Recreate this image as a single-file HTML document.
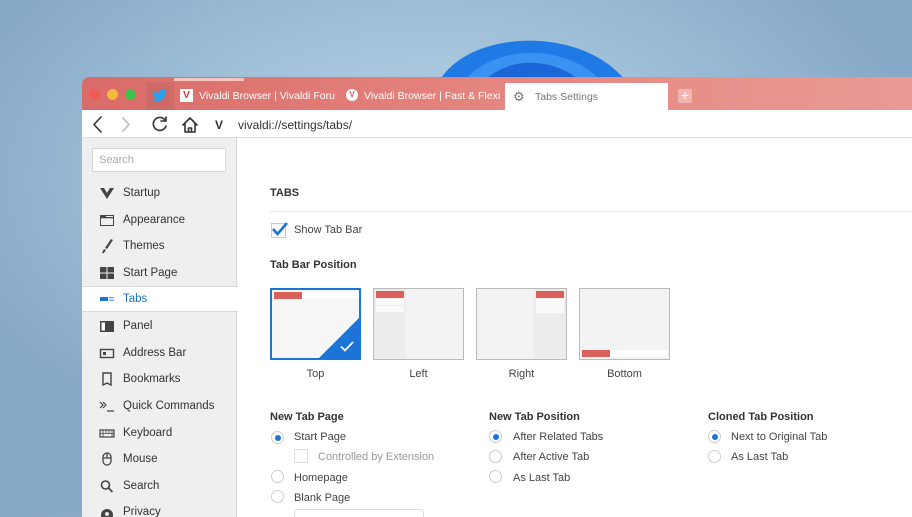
<!DOCTYPE html>
<html><head><style>
*{box-sizing:border-box;margin:0;padding:0}
body{width:912px;height:513px;overflow:hidden;position:relative;font-family:"Liberation Sans",sans-serif;background:radial-gradient(ellipse 500px 300px at 430px 180px,#bcd5e6 0%,#9fbfd8 55%,#86a9c7 100%)}
.abs{position:absolute}
.win{left:82px;top:77px;width:840px;height:440px;border-radius:7px 0 0 0;overflow:hidden;background:#fff}
.tabbar{left:0;top:0;width:840px;height:33px;background:linear-gradient(90deg,#d96b68,#e58680 50%,#e99b95)}
.dot{width:11px;height:11px;border-radius:50%;top:12px}
.tab{top:5px;height:28px;font-size:10.5px;color:#fff;line-height:28px;white-space:nowrap;overflow:hidden}
.addr{left:0;top:33px;width:840px;height:28px;background:#fff;border-bottom:1px solid #ddd}
.side{left:0;top:61px;width:155px;height:400px;background:#efefef;border-right:1px solid #d8d8d8}
.item{left:0;width:155px;height:26px;font-size:11.5px;color:#333;line-height:28px;padding-left:41px}
.ic{position:absolute;left:17px;top:7px;width:16px;height:14px}
.h{font-size:11px;font-weight:bold;color:#333}
.t{font-size:11px;color:#444}
.thumb{top:211px;width:91px;height:72px;border:1px solid #bbb;background:#f3f3f3;overflow:hidden}
.lbl{top:291px;font-size:11px;color:#444;width:91px;text-align:center}
.r{width:13px;height:13px;border-radius:50%;border:1px solid #ccc;background:#fff}
.r.on::after{content:"";position:absolute;left:3px;top:3px;width:6px;height:6px;border-radius:50%;background:#1d74d8}
</style></head><body>
<svg class="abs" style="left:430px;top:35px" width="200" height="45" viewBox="0 0 200 45"><path d="M10 45 C40 -5 150 -10 195 45 Z" fill="#1f7ae6"/><path d="M35 45 C65 10 135 8 170 45 Z" fill="#3a92f2"/><path d="M55 45 C80 22 120 22 150 45Z" fill="#1a66d6"/></svg>
<div class="abs win">
 <div class="abs tabbar">
  <div class="abs dot" style="left:7px;background:#ee5b57"></div>
  <div class="abs dot" style="left:25px;background:#f4b93a"></div>
  <div class="abs dot" style="left:43px;background:#3ec24a"></div>
  <div class="abs" style="left:64px;top:5px;width:28px;height:28px;background:rgba(0,0,0,.05)"></div>
  <svg class="abs" style="left:70px;top:12px" width="15" height="13" viewBox="0 0 24 20"><path d="M24 2.4a10 10 0 0 1-2.8.8A5 5 0 0 0 23.3.4a10 10 0 0 1-3.1 1.2A4.9 4.9 0 0 0 11.8 6 14 14 0 0 1 1.7.9a4.9 4.9 0 0 0 1.5 6.6A5 5 0 0 1 1 6.9a4.9 4.9 0 0 0 3.9 4.9 5 5 0 0 1-2.2.1 4.9 4.9 0 0 0 4.6 3.4A9.9 9.9 0 0 1 0 17.3 14 14 0 0 0 7.5 19.5c9 0 14-7.5 14-14v-.6A10 10 0 0 0 24 2.4z" fill="#2aa1ee"/></svg>
  <div class="abs" style="left:92px;top:1px;width:70px;height:3px;background:#f5c5c2"></div>
  <div class="abs tab" style="left:96px;width:160px"><span style="display:inline-block;width:13px;height:13px;background:#fff;vertical-align:middle;margin:-2px 6px 0 2px;color:#d33;font-size:10px;font-weight:bold;line-height:13px;text-align:center">V</span>Vivaldi Browser | Vivaldi Foru</div>
  <div class="abs tab" style="left:262px;width:160px"><span style="display:inline-block;width:12px;height:12px;border-radius:50%;background:#fff;vertical-align:middle;margin:-2px 6px 0 2px;color:#d55;font-size:8px;font-weight:bold;line-height:12px;text-align:center">V</span>Vivaldi Browser | Fast &amp; Flexi</div>
  <div class="abs tab" style="left:423px;width:163px;background:#fff;color:#777;padding-left:30px;top:6px;height:27px">Tabs Settings<span style="position:absolute;left:8px;top:0;color:#777;font-size:13px">⚙</span></div>
  <div class="abs" style="left:596px;top:12px;width:14px;height:14px;border-radius:2px;background:#f2b5b1;color:#fff;font-size:14px;line-height:13px;text-align:center">+</div>
 </div>
 <div class="abs addr">
  <svg class="abs" style="left:8px;top:6px" width="110" height="17" viewBox="0 0 110 17" fill="none" stroke-width="1.6" stroke-linecap="round" stroke-linejoin="round"><path d="M11 1 L4 8.5 L11 16" stroke="#333"/><path d="M33 2 L39 8.5 L33 15" stroke="#bbb"/><path d="M75 4 A6.5 6.5 0 1 0 76 10" stroke="#333"/><path d="M71 5 L76 5 L76 1" stroke="#333"/><path d="M93 9 L100 2 L107 9 M95 7 V16 H105 V7 M98.5 16 V12 H101.5 V16" stroke="#333"/></svg>
  <div class="abs" style="left:133px;top:8px;font-size:12px;color:#333;font-weight:bold">V</div>
  <div class="abs" style="left:156px;top:8px;font-size:12px;color:#333">vivaldi://settings/tabs/</div>
 </div>
 <div class="abs side">
  <div class="abs" style="left:10px;top:10px;width:134px;height:24px;background:#fff;border:1px solid #d6d6d6;font-size:11px;color:#aaa;line-height:22px;padding-left:6px">Search</div>
 </div>
 <div class="abs item" style="top:102px"><svg class="ic" viewBox="0 0 16 14"><path d="M1 2 L8 13 L15 2 L11 2 L8 7 L5 2Z" fill="#444"/></svg>Startup</div>
 <div class="abs item" style="top:129px"><svg class="ic" viewBox="0 0 16 14"><rect x="1.5" y="2.5" width="13" height="10" fill="none" stroke="#444"/><rect x="1" y="2" width="6" height="2" fill="#444"/><rect x="1" y="4" width="14" height="1.3" fill="#444"/></svg>Appearance</div>
 <div class="abs item" style="top:155px"><svg class="ic" viewBox="0 0 16 14"><path d="M12 0 L14 1 L8 10 L6 9Z M5 10 L7 11 L5 14 L3 14Z" fill="#444"/></svg>Themes</div>
 <div class="abs item" style="top:182px"><svg class="ic" viewBox="0 0 16 14"><rect x="1" y="1" width="6.5" height="5.5" fill="#444"/><rect x="8.5" y="1" width="6.5" height="5.5" fill="#444"/><rect x="1" y="7.5" width="6.5" height="5.5" fill="#444"/><rect x="8.5" y="7.5" width="6.5" height="5.5" fill="#444"/></svg>Start Page</div>
 <div class="abs item" style="top:209px;height:26px;background:#fff;border-top:1px solid #d8d8d8;border-bottom:1px solid #d8d8d8;width:156px;color:#1d6fc9;line-height:24px"><svg class="ic" style="top:5px" viewBox="0 0 16 14"><rect x="1" y="5" width="8" height="4" fill="#1d74d8"/><rect x="10" y="5" width="5" height="1.3" fill="#6aa3e6"/><rect x="10" y="7.7" width="5" height="1.3" fill="#6aa3e6"/></svg>Tabs</div>
 <div class="abs item" style="top:235px"><svg class="ic" viewBox="0 0 16 14"><rect x="1" y="2" width="14" height="11" fill="#444"/><rect x="2.5" y="3.5" width="3.5" height="8" fill="#fff"/></svg>Panel</div>
 <div class="abs item" style="top:262px"><svg class="ic" viewBox="0 0 16 14"><rect x="1.5" y="3.5" width="13" height="8" fill="none" stroke="#444" stroke-width="1.4"/><rect x="4" y="6" width="3" height="3" fill="#444"/></svg>Address Bar</div>
 <div class="abs item" style="top:288px"><svg class="ic" viewBox="0 0 16 14"><path d="M4 1 H12 V13 L8 11 L4 13Z" fill="none" stroke="#444" stroke-width="1.4"/></svg>Bookmarks</div>
 <div class="abs item" style="top:315px"><svg class="ic" viewBox="0 0 16 14"><path d="M1 3 L4 6 L1 9 M4 3 L7 6 L4 9 M8 12 H15" fill="none" stroke="#444" stroke-width="1.2"/></svg>Quick Commands</div>
 <div class="abs item" style="top:342px"><svg class="ic" viewBox="0 0 16 14"><rect x="1" y="4" width="14" height="7" fill="none" stroke="#444" stroke-width="1.2"/><path d="M1 7.5 H15 M4 4 V11 M7 4 V7.5 M10 4 V7.5 M13 4 V11" stroke="#444" stroke-width=".8"/></svg>Keyboard</div>
 <div class="abs item" style="top:368px"><svg class="ic" viewBox="0 0 16 14"><path d="M4 5 A4 4 0 0 1 12 5 V9 A4 4 0 0 1 4 9Z M4 6 H12 M8 1 V6" fill="none" stroke="#444" stroke-width="1.3"/></svg>Mouse</div>
 <div class="abs item" style="top:395px"><svg class="ic" viewBox="0 0 16 14"><circle cx="6.5" cy="6" r="4" fill="none" stroke="#444" stroke-width="1.6"/><path d="M9.5 9 L13.5 13" stroke="#444" stroke-width="1.8"/></svg>Search</div>
 <div class="abs item" style="top:421px"><svg class="ic" viewBox="0 0 16 14"><circle cx="8" cy="10" r="6" fill="#444"/><circle cx="8" cy="9" r="2" fill="#efefef"/></svg>Privacy</div>

 <div class="abs h" style="left:188px;top:110px">TABS</div>
 <div class="abs" style="left:188px;top:134px;width:660px;height:1px;background:#e6e6e6"></div>
 <div class="abs" style="left:189px;top:146px;width:15px;height:15px;border:1px solid #ccc;background:#fff"></div>
 <svg class="abs" style="left:189px;top:144px" width="18" height="16" viewBox="0 0 18 16"><path d="M2 8 L6.5 13 L16 2" fill="none" stroke="#1d74d8" stroke-width="2.6"/></svg>
 <div class="abs t" style="left:212px;top:147px">Show Tab Bar</div>
 <div class="abs h" style="left:188px;top:182px">Tab Bar Position</div>

 <div class="abs thumb" style="left:188px;border:2px solid #1d74d8;background:#f6f6f6"><div class="abs" style="left:2px;top:2px;width:28px;height:7px;background:#d9605b"></div><div class="abs" style="left:30px;top:2px;width:57px;height:7px;background:#fff"></div><div class="abs" style="right:0;bottom:0;width:0;height:0;border-left:40px solid transparent;border-bottom:40px solid #1d74d8"></div><svg class="abs" style="right:5px;bottom:6px" width="14" height="11" viewBox="0 0 14 11"><path d="M1 5.5 L5 9.5 L13 1" fill="none" stroke="#fff" stroke-width="1.8"/></svg></div>
 <div class="abs thumb" style="left:291px"><div class="abs" style="left:0;top:0;width:32px;height:72px;background:#ececec"></div><div class="abs" style="left:2px;top:2px;width:28px;height:7px;background:#d9605b"></div><div class="abs" style="left:2px;top:10px;width:28px;height:6px;background:#fafafa"></div><div class="abs" style="left:2px;top:17px;width:28px;height:6px;background:#fafafa"></div></div>
 <div class="abs thumb" style="left:394px"><div class="abs" style="right:0;top:0;width:32px;height:72px;background:#ececec"></div><div class="abs" style="right:2px;top:2px;width:28px;height:7px;background:#d9605b"></div><div class="abs" style="right:2px;top:10px;width:28px;height:14px;background:#fafafa"></div></div>
 <div class="abs thumb" style="left:497px"><div class="abs" style="left:2px;bottom:2px;width:28px;height:7px;background:#d9605b"></div><div class="abs" style="left:30px;bottom:2px;width:57px;height:7px;background:#fff"></div></div>
 <div class="abs lbl" style="left:188px">Top</div>
 <div class="abs lbl" style="left:291px">Left</div>
 <div class="abs lbl" style="left:394px">Right</div>
 <div class="abs lbl" style="left:497px">Bottom</div>

 <div class="abs h" style="left:188px;top:334px">New Tab Page</div>
 <div class="abs r on" style="left:189px;top:354px"></div><div class="abs t" style="left:212px;top:354px">Start Page</div>
 <div class="abs" style="left:212px;top:372px;width:14px;height:14px;border:1px solid #ddd;background:#fff"></div><div class="abs t" style="left:236px;top:374px;color:#999">Controlled by Extension</div>
 <div class="abs r" style="left:189px;top:393px"></div><div class="abs t" style="left:212px;top:395px">Homepage</div>
 <div class="abs r" style="left:189px;top:413px"></div><div class="abs t" style="left:212px;top:415px">Blank Page</div>
 <div class="abs" style="left:212px;top:432px;width:130px;height:10px;border:1px solid #ddd;border-radius:3px"></div>

 <div class="abs h" style="left:407px;top:334px">New Tab Position</div>
 <div class="abs r on" style="left:407px;top:353px"></div><div class="abs t" style="left:431px;top:354px">After Related Tabs</div>
 <div class="abs r" style="left:407px;top:373px"></div><div class="abs t" style="left:431px;top:374px">After Active Tab</div>
 <div class="abs r" style="left:407px;top:393px"></div><div class="abs t" style="left:431px;top:395px">As Last Tab</div>

 <div class="abs h" style="left:626px;top:334px">Cloned Tab Position</div>
 <div class="abs r on" style="left:626px;top:353px"></div><div class="abs t" style="left:649px;top:354px">Next to Original Tab</div>
 <div class="abs r" style="left:626px;top:373px"></div><div class="abs t" style="left:649px;top:374px">As Last Tab</div>
</div>
</body></html>
